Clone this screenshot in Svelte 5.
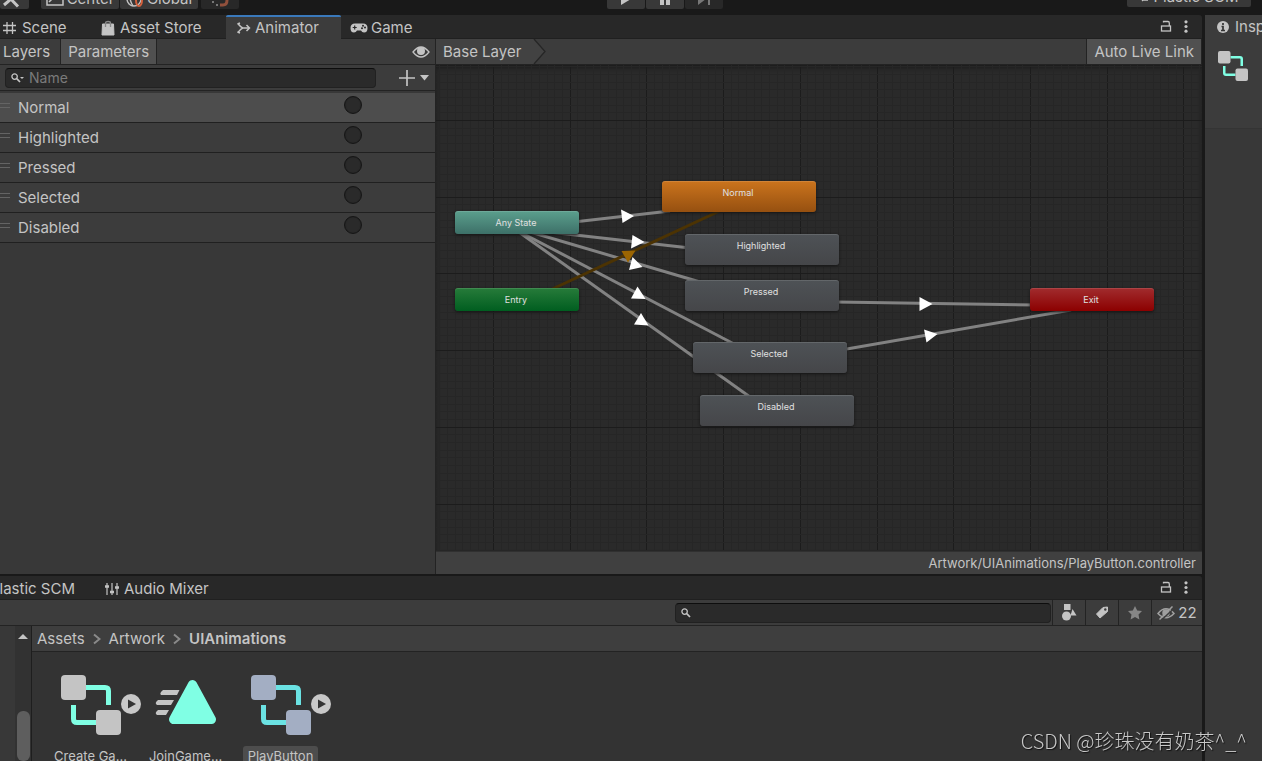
<script>
    const tabs = [
        { id: 'scene', label: 'Scene' },
        { id: 'store', label: 'Asset Store' },
        { id: 'animator', label: 'Animator' },
        { id: 'game', label: 'Game' }
    ]

    const parameters = ['Normal', 'Highlighted', 'Pressed', 'Selected', 'Disabled']

    // Graph coordinates are relative to the top left corner of the canvas
    const nodes = [
        { label: 'Any State', kind: 'any', x: 19, y: 146 },
        { label: 'Entry', kind: 'entry', x: 19, y: 223 },
        { label: 'Exit', kind: 'exit', x: 594, y: 223 },
        { label: 'Normal', kind: 'default', x: 226, y: 116 },
        { label: 'Highlighted', kind: 'state', x: 249, y: 169 },
        { label: 'Pressed', kind: 'state', x: 249, y: 215 },
        { label: 'Selected', kind: 'state', x: 257, y: 277 },
        { label: 'Disabled', kind: 'state', x: 264, y: 330 }
    ]

    const transitions = [
        { line: [94, 162, 234, 146], arrow: '185,144.5 198,151 186.5,158' },
        { line: [104, 166, 254, 183], arrow: '196.5,170 208.5,177 195,183.5' },
        { line: [84, 164, 264, 217], arrow: '196.5,192 206.5,202 193,205' },
        { line: [84, 167, 300, 280], arrow: '201.5,221.5 209.5,234 195,233.5' },
        { line: [80, 165, 314, 332], arrow: '205,248 212.5,260.5 198,259.5' },
        { line: [400, 237, 600, 240], arrow: '483.5,232 496.5,239 483.5,246' },
        { line: [405, 285, 635, 245], arrow: '488,264.5 501.5,269 490.5,277.5' },
        { line: [110, 227, 290, 143], arrow: '185.5,186 199.5,185.5 192,197.5', entry: true }
    ]

    const GRID = 76.7
    const gridLines = (start, length) => {
        const lines = []
        for (let i = -9; start + (i * GRID) / 10 < length; i++) {
            lines.push({ at: Math.round(start + (i * GRID) / 10), major: i % 10 === 0 })
        }
        return lines
    }
    const columns = gridLines(57, 2600)
    const rows = gridLines(55, 1600)

    const assets = [
        { name: 'Create Ga...', type: 'controller' },
        { name: 'JoinGame...', type: 'clip' },
        { name: 'PlayButton', type: 'controller' }
    ]

    let activeTab = $state('animator')
    let selectedParameter = $state('Normal')
    let selectedAsset = $state('PlayButton')
    let filter = $state('')
    let search = $state('')
</script>

{#snippet controllerIcon(size)}
    <svg class="controller-icon" width={size} height={size} viewBox="0 0 60 60" aria-hidden="true">
        <path class="wire" d="M25 12.500H44q3.500 0 3.500 3.500V30M12.500 30V44q0 3.500 3.500 3.500H35" />
        <rect width="25" height="25" rx="4" />
        <rect x="35" y="35" width="25" height="25" rx="4" />
    </svg>
{/snippet}

{#snippet searchIcon()}
    <svg width="10" height="10" viewBox="0 0 10 10" fill="none" stroke="#c4c4c4" stroke-width="1.300" aria-hidden="true">
        <circle cx="3.600" cy="3.600" r="2.700" />
        <path d="M5.700 5.700L9 9" stroke-width="1.700" />
    </svg>
{/snippet}

{#snippet windowButtons()}
    <div class="window-buttons">
        <button aria-label="Lock">
            <svg width="12" height="14" viewBox="0 0 12 14" fill="none" stroke="#c4c4c4" stroke-width="1.300">
                <rect x="1.500" y="6" width="9" height="5" />
                <path d="M3.500 2.500V1.500H8Q9.300 1.500 9.300 3V6" />
            </svg>
        </button>
        <button aria-label="Menu">
            <svg width="4" height="14" viewBox="0 0 4 14" fill="#c4c4c4">
                <circle cx="2" cy="1.800" r="1.600" />
                <circle cx="2" cy="6.500" r="1.600" />
                <circle cx="2" cy="11.200" r="1.600" />
            </svg>
        </button>
    </div>
{/snippet}

<div class="editor">
    <header class="toolbar">
        <button class="tool first" aria-label="Custom tools">
            <svg width="18" height="18" viewBox="0 0 18 18" stroke="#c4c4c4" stroke-width="3" fill="none">
                <path d="M3 3L16 16.500M15 4L2 15" />
            </svg>
        </button>
        <button class="tool pivot">
            <svg width="18" height="14" viewBox="0 0 18 14" fill="none" stroke="#c4c4c4" stroke-width="1.500">
                <rect x="1" y="1" width="16" height="12" />
                <path d="M3 10L6 7" />
            </svg>
            Center
        </button>
        <button class="tool space">
            <svg width="18" height="16" viewBox="0 0 18 16" fill="none" stroke="#c4c4c4" stroke-width="1.400">
                <circle cx="8" cy="8" r="7" />
                <path d="M4 1.500Q3 9 7 15" />
                <ellipse cx="13" cy="9" rx="3" ry="6" stroke="#d5603c" stroke-width="2" />
            </svg>
            Global
        </button>
        <button class="tool snap" aria-label="Grid snapping" disabled>
            <svg width="18" height="16" viewBox="0 0 18 16" fill="none" stroke-width="3">
                <path d="M9 14H12Q16 14 16 9V4" stroke="#91503c" />
                <path d="M1 11H3M5 14H7M5 8H7" stroke="#777" stroke-width="2" />
            </svg>
        </button>
        <span class="spacer-left"></span>
        <button class="tool play" aria-label="Play">
            <svg width="14" height="12" viewBox="0 0 14 12" fill="#c4c4c4"><path d="M2 0L12 6L2 12Z" /></svg>
        </button>
        <button class="tool play" aria-label="Pause">
            <svg width="14" height="12" viewBox="0 0 14 12" fill="#c4c4c4"><path d="M2 0H6V12H2ZM8 0H12V12H8Z" /></svg>
        </button>
        <button class="tool play" aria-label="Step" disabled>
            <svg width="14" height="12" viewBox="0 0 14 12" fill="#777"><path d="M1 0L9 6L1 12ZM11 0H13V12H11Z" /></svg>
        </button>
        <span class="spacer-right"></span>
        <button class="tool plastic">
            <svg width="10" height="10" viewBox="0 0 10 10" fill="none" stroke="#c4c4c4" stroke-width="1.500">
                <path d="M1 4L4 9M5 4V8H9" />
            </svg>
            Plastic SCM
        </button>
    </header>

    <div class="workspace">
        <main>
            <section class="dock upper">
                <div class="tab-bar">
                    {#each tabs as tab}
                        <button class="tab {tab.id}" class:active={activeTab === tab.id} onclick={() => (activeTab = tab.id)}>
                            {#if tab.id === 'scene'}
                                <svg width="14" height="14" viewBox="0 0 14 14" fill="none" stroke="#c4c4c4" stroke-width="1.300">
                                    <path d="M4 1V13M9.500 1V13M0 4.500H13M0 9.500H13" />
                                </svg>
                            {:else if tab.id === 'store'}
                                <svg width="14" height="16" viewBox="0 0 14 16">
                                    <path d="M1.500 4H12.500L13 15H1Z" fill="#c4c4c4" stroke="#c4c4c4" stroke-linejoin="round" />
                                    <path d="M4.500 7V3Q4.500 1.500 7 1.500Q9.500 1.500 9.500 3V7" fill="none" stroke="#888" stroke-width="1.300" />
                                </svg>
                            {:else if tab.id === 'animator'}
                                <svg width="14" height="14" viewBox="0 0 14 14" fill="none" stroke="#c4c4c4" stroke-width="1.500">
                                    <path d="M1 2.500Q4 6.500 6 7H12.500M1 11.500Q4 7.500 6 7M9.500 4L12.500 7L9.500 10" />
                                    <path d="M.500 3L3 2M.500 11L3 12" />
                                </svg>
                            {:else}
                                <svg width="18" height="12" viewBox="0 0 18 12">
                                    <path d="M5 1.500H13Q17.500 1.500 17.500 6T14 10.500Q12 10.500 11 8.500H7Q6 10.500 4 10.500Q.500 10.500 .500 6T5 1.500Z" fill="#c4c4c4" />
                                    <path d="M2.700 5.500H6.700M4.700 3.500V7.500" stroke="#282828" stroke-width="1.200" />
                                    <circle cx="13" cy="3.700" r="1" fill="#282828" />
                                    <circle cx="15" cy="5.500" r="1" fill="#282828" />
                                    <circle cx="12" cy="6.300" r="1" fill="#282828" />
                                </svg>
                            {/if}
                            {tab.label}
                        </button>
                    {/each}
                    {@render windowButtons()}
                </div>

                <div class="animator-window">
                    <aside class="side-panel">
                        <div class="bar">
                            <button class="bar-button layers">Layers</button>
                            <button class="bar-button on">Parameters</button>
                            <button class="eye" aria-label="Toggle panel">
                                <svg width="18" height="12" viewBox="0 0 18 12">
                                    <path d="M1 6Q9 -4 17 6Q9 16 1 6Z" fill="none" stroke="#c4c4c4" stroke-width="1.300" />
                                    <circle cx="9" cy="5" r="4" fill="#c4c4c4" />
                                </svg>
                            </button>
                        </div>
                        <div class="filter-row">
                            <div class="field">
                                {@render searchIcon()}
                                <span class="mini-caret"></span>
                                <input class="name-filter" type="text" placeholder="Name" aria-label="Filter parameters" bind:value={filter} />
                            </div>
                            <button class="add" aria-label="Add parameter">
                                <svg width="32" height="16" viewBox="0 0 32 16">
                                    <path d="M8 0V16M0 8H16" stroke="#c4c4c4" stroke-width="1.700" />
                                    <path d="M21 5H30L25.500 10.500Z" fill="#c4c4c4" />
                                </svg>
                            </button>
                        </div>
                        <ul class="parameters">
                            {#each parameters as name}
                                <li class:selected={selectedParameter === name}>
                                    <span class="grip"></span>
                                    <label for="param-{name}">{name}</label>
                                    <input id="param-{name}" type="radio" name="trigger" onclick={() => (selectedParameter = name)} />
                                </li>
                            {/each}
                        </ul>
                    </aside>

                    <div class="graph">
                        <div class="bar">
                            <button class="crumb">Base Layer</button>
                            <svg width="14" height="25" viewBox="0 0 14 25">
                                <path d="M0 0H1L12 12.500L1 25H0Z" fill="#424242" />
                                <path d="M1 0L12 12.500L1 25" fill="none" stroke="#262626" stroke-width="1.300" />
                            </svg>
                            <button class="bar-button on live">Auto Live Link</button>
                        </div>
                        <div class="canvas">
                            <svg class="lines" width="100%" height="100%">
                                <g shape-rendering="crispEdges">
                                    {#each columns as column}
                                        <line class="grid-line" class:major={column.major} x1={column.at} x2={column.at} y1="0" y2="100%" />
                                    {/each}
                                    {#each rows as row}
                                        <line class="grid-line" class:major={row.major} x1="0" x2="100%" y1={row.at} y2={row.at} />
                                    {/each}
                                </g>
                                {#each transitions as { line, arrow, entry }}
                                    <g class="transition" class:entry>
                                        <line x1={line[0]} y1={line[1]} x2={line[2]} y2={line[3]} />
                                        <polygon points={arrow} />
                                    </g>
                                {/each}
                            </svg>
                            {#each nodes as node}
                                <button class="node {node.kind}" style="left: {node.x}px; top: {node.y}px">{node.label}</button>
                            {/each}
                        </div>
                        <div class="path">Artwork/UIAnimations/PlayButton.controller</div>
                    </div>
                </div>
            </section>

            <section class="dock lower">
                <div class="tab-bar">
                    <button class="tab scm"><span>Plastic SCM</span></button>
                    <button class="tab mixer">
                        <svg width="14" height="14" viewBox="0 0 14 14" stroke="#c4c4c4" fill="#c4c4c4">
                            <path d="M2 1V13M7 1V13M12 1V13" stroke-width="1.200" />
                            <path d="M0 4.500H4M5 10H9M10 5.500H14" stroke-width="2.500" />
                        </svg>
                        Audio Mixer
                    </button>
                    {@render windowButtons()}
                </div>
                <div class="bar project-bar">
                    <div class="field">
                        {@render searchIcon()}
                        <input type="text" aria-label="Search assets" bind:value={search} />
                    </div>
                    <button class="filter" aria-label="Search by type">
                        <svg width="16" height="18" viewBox="0 0 16 18" fill="#c4c4c4">
                            <path d="M3 0H9.500V6H3ZM11.500 5L15.500 11.500H9.500Z" />
                            <circle cx="5.500" cy="12" r="4.500" />
                        </svg>
                    </button>
                    <button class="filter" aria-label="Search by label">
                        <svg width="14" height="14" viewBox="0 0 14 14">
                            <path d="M8 1.500L12.500 1L12.500 5.500L5 12L1.500 8Z" fill="#c4c4c4" stroke="#c4c4c4" stroke-linejoin="round" />
                            <circle cx="10.300" cy="3.500" r="1.200" fill="#3c3c3c" />
                        </svg>
                    </button>
                    <button class="filter" aria-label="Favorites">
                        <svg width="16" height="16" viewBox="0 0 16 16" fill="#868686">
                            <path d="M8 1L10.200 5.500L15 6.100L11.500 9.500L12.400 14.500L8 12L3.600 14.500L4.500 9.500L1 6.100L5.800 5.500Z" />
                        </svg>
                    </button>
                    <button class="filter hidden-count">
                        <svg width="18" height="14" viewBox="0 0 18 14" fill="none" stroke="#a0a0a0" stroke-width="1.500">
                            <path d="M1 7.500Q9 -2 17 7.500Q9 16 1 7.500Z" />
                            <circle cx="9" cy="7" r="3" fill="#a0a0a0" />
                            <path d="M4.500 14L17.500 2" stroke="#3c3c3c" />
                            <path d="M2.500 13.500L15.500 .500" />
                        </svg>
                        22
                    </button>
                </div>
                <div class="project">
                    <div class="tree"></div>
                    <div class="scrollbar">
                        <span class="up"></span>
                        <span class="thumb"></span>
                    </div>
                    <div class="browser">
                        <nav>
                            <a href="#assets">Assets</a>
                            <svg width="8" height="12" viewBox="0 0 8 12"><path d="M1 1.500L6.500 6L1 10.500" /></svg>
                            <a href="#artwork">Artwork</a>
                            <svg width="8" height="12" viewBox="0 0 8 12"><path d="M1 1.500L6.500 6L1 10.500" /></svg>
                            <a class="current" href="#uianimations">UIAnimations</a>
                        </nav>
                        <div class="assets">
                            {#each assets as asset}
                                <button class="asset" class:selected={selectedAsset === asset.name} onclick={() => (selectedAsset = asset.name)}>
                                    {#if asset.type === 'controller'}
                                        {@render controllerIcon(60)}
                                        <svg class="expand" width="20" height="20" viewBox="0 0 20 20">
                                            <circle cx="10" cy="10" r="10" fill="#c8c8c8" />
                                            <path d="M7 5.500L15 10L7 14.500Z" fill="#333" />
                                        </svg>
                                    {:else}
                                        <svg width="62" height="60" viewBox="0 0 62 60">
                                            <path d="M37.500 9.500L18.500 44.500H56.500Z" fill="#80ffe4" stroke="#80ffe4" stroke-width="9" stroke-linejoin="round" />
                                            <path d="M8 15H24.500L22 20H6Q4 18 8 15ZM3 25H19L16 30H2Q-1 28 3 25ZM3 35H14L11 40H2Q-1 38 3 35Z" fill="#c4c4c4" />
                                        </svg>
                                    {/if}
                                    <span class="name">{asset.name}</span>
                                </button>
                            {/each}
                        </div>
                    </div>
                </div>
            </section>
        </main>

        <aside class="inspector">
            <div class="inspector-tab">
                <svg width="12" height="12" viewBox="0 0 12 12">
                    <circle cx="6" cy="6" r="6" fill="#c4c4c4" />
                    <path d="M6 2V4M4.500 5.500H6V9.500M4 9.500H8" fill="none" stroke="#333" stroke-width="1.700" />
                </svg>
                Inspector
            </div>
            <div class="inspector-head">{@render controllerIcon(30)}</div>
        </aside>
    </div>

    <div class="watermark">CSDN @珍珠没有奶茶^_^</div>
</div>

<style>
    :global(body) {
        margin: 0;
        background: #383838;
    }

    .editor {
        display: flex;
        flex-direction: column;
        height: 100vh;
        overflow: hidden;
        font-family: Inter, 'Noto Sans CJK SC', sans-serif;
        font-size: 15px;
        line-height: 20px;
        color: #c4c4c4;
        background: #191919;
    }

    button,
    input {
        margin: 0;
        padding: 0;
        border: 0;
        border-radius: 0;
        background: none;
        color: inherit;
        font: inherit;
    }

    svg {
        display: block;
        flex: none;
    }

    /* Main toolbar */
    .toolbar {
        display: flex;
        align-items: flex-end;
        flex: none;
        gap: 1px;
        height: 9px;
        padding: 0 11px 6px 0;
        overflow: hidden;
    }

    .tool {
        display: flex;
        align-items: center;
        justify-content: center;
        flex: none;
        gap: 3px;
        height: 20px;
        background: #383838;
        border-radius: 0 0 2px 2px;
        white-space: nowrap;
    }

    .tool:disabled {
        background: #282828;
    }

    .first {
        width: 29px;
        margin-right: 11px;
        padding-right: 8px;
        box-sizing: border-box;
    }

    .pivot,
    .space {
        width: 78px;
    }

    .snap {
        width: 38px;
        margin-left: 2px;
    }

    .play {
        width: 38px;
    }

    .plastic {
        gap: 4px;
        width: 124px;
        margin-bottom: 2px;
    }

    .spacer-left {
        flex: 10;
    }

    .spacer-right {
        flex: 11;
    }

    .workspace {
        display: flex;
        flex: 1;
        min-height: 0;
    }

    main {
        display: flex;
        flex-direction: column;
        flex: 1;
        min-width: 0;
        border-right: 3px solid #191919;
    }

    .dock {
        display: flex;
        flex-direction: column;
        min-height: 0;
    }

    .upper {
        flex: 1;
    }

    .lower {
        flex: none;
        height: 185px;
        border-top: 2px solid #191919;
    }

    .tab-bar {
        display: flex;
        flex: none;
        height: 23px;
        background: #282828;
        border-bottom: 1px solid #202020;
        border-radius: 0 3px 0 0;
    }

    .tab {
        display: flex;
        align-items: center;
        gap: 5px;
        border-top: 2px solid transparent;
        white-space: nowrap;
        box-sizing: border-box;
    }

    .scene {
        width: 92px;
        padding-left: 3px;
    }

    .store {
        width: 134px;
        padding-left: 9px;
    }

    .animator {
        width: 115px;
        padding-left: 11px;
        gap: 4px;
    }

    .game {
        padding-left: 9px;
        gap: 3px;
    }

    .tab.active {
        height: 24px;
        border-top-color: #3a79bb;
        border-radius: 2px 2px 0 0;
        background: #3c3c3c;
    }

    .scm {
        justify-content: flex-end;
        width: 75px;
        overflow: hidden;
    }

    .mixer {
        margin-left: 30px;
    }

    .window-buttons {
        display: flex;
        align-items: center;
        gap: 12px;
        margin-left: auto;
        padding-right: 14px;
    }

    .bar {
        display: flex;
        align-items: stretch;
        flex: none;
        height: 25px;
        background: #3c3c3c;
        border-bottom: 1px solid #232323;
    }

    .bar-button {
        padding: 0 6px;
        border-right: 1px solid #232323;
        white-space: nowrap;
    }

    .layers {
        padding: 0 10px 0 3px;
    }

    .on {
        padding: 0 7px;
        background: #505050;
    }

    .animator-window {
        display: flex;
        flex: 1;
        min-height: 0;
    }

    .side-panel {
        flex: none;
        width: 435px;
        border-right: 1px solid #232323;
        background: #383838;
    }

    .eye {
        margin-left: auto;
        padding: 0 5px;
    }

    .filter-row {
        display: flex;
        align-items: center;
        justify-content: space-between;
        height: 25px;
        padding: 0 4px 0 5px;
        border-bottom: 1px solid #232323;
        background: #3c3c3c;
    }

    .field {
        display: flex;
        align-items: center;
        width: 371px;
        height: 20px;
        padding-left: 5px;
        border: 1px solid #212121;
        border-top-color: #0d0d0d;
        border-radius: 4px;
        background: #2a2a2a;
        box-sizing: border-box;
    }

    .field input {
        flex: 1;
        min-width: 0;
        margin-left: 5px;
        outline: none;
    }

    .field .name-filter {
        font-size: 14px;
    }

    .field input::placeholder {
        color: #7a7a7a;
        opacity: 1;
    }

    .mini-caret {
        border: 2px solid transparent;
        border-top-color: #c4c4c4;
        border-bottom: 0;
        margin-left: -1px;
    }

    .parameters {
        margin: 0;
        padding: 2px 0 0;
        list-style: none;
    }

    .parameters li {
        display: flex;
        align-items: center;
        height: 29px;
        padding-right: 73px;
        border-bottom: 1px solid #202020;
        background: #3c3c3c;
    }

    .parameters .selected {
        background: #4d4d4d;
    }

    .grip {
        width: 10px;
        height: 3px;
        margin: 0 8px 5px 0;
        border: solid #646464;
        border-width: 1px 0;
    }

    .parameters label {
        flex: 1;
    }

    .parameters input {
        appearance: none;
        width: 18px;
        height: 18px;
        margin-bottom: 6px;
        border: 1px solid #161616;
        border-radius: 50%;
        background: #2a2a2a;
        box-shadow: inset 0 0 1px #161616;
    }

    .graph {
        display: flex;
        flex-direction: column;
        flex: 1;
        min-width: 0;
    }

    .crumb {
        padding: 0 12px 0 7px;
        background: #424242;
    }

    .live {
        margin-left: auto;
        border-left: 1px solid #232323;
    }

    .canvas {
        position: relative;
        flex: 1;
        min-height: 0;
        overflow: hidden;
        background: #2a2a2a;
        box-shadow: inset 0 3px 4px #1c1c1c;
    }

    .lines {
        position: absolute;
        inset: 0;
    }

    .grid-line {
        stroke: #262626;
    }

    .grid-line.major {
        stroke: #1c1c1c;
    }

    .transition line {
        stroke: #828282;
        stroke-width: 3;
    }

    .transition polygon {
        fill: #fff;
    }

    .transition.entry line {
        stroke: #4c3303;
    }

    .transition.entry polygon {
        fill: #9b6502;
    }

    .node {
        position: absolute;
        width: 154px;
        height: 31px;
        padding: 0 2px 8px 0;
        border-radius: 3px;
        background: linear-gradient(#4e5256, #454649);
        box-shadow: inset 0 1px rgba(255, 255, 255, 0.12), 0 1px 3px #151515;
        color: #e0e0e0;
        font-size: 9px;
        line-height: 12px;
    }

    .any,
    .entry.node,
    .exit {
        width: 124px;
        height: 23px;
        padding-bottom: 0;
    }

    .any {
        background: linear-gradient(#5b9f8d, #3d7068);
    }

    .entry.node {
        background: linear-gradient(#277b3a, #005e20);
    }

    .exit {
        background: linear-gradient(#a12c2e, #8c0000);
    }

    .default {
        background: linear-gradient(#cb741d, #965010);
    }

    .path {
        flex: none;
        height: 22px;
        padding-right: 6px;
        border-top: 1px solid #303030;
        background: #404040;
        font-size: 13px;
        line-height: 22px;
        text-align: right;
    }

    /* Project window */
    .project-bar {
        align-items: center;
        justify-content: flex-end;
    }

    .project-bar .field {
        width: 376px;
        margin-right: 1px;
    }

    .filter {
        display: flex;
        align-items: center;
        justify-content: center;
        width: 33px;
        height: 25px;
        border-left: 1px solid #232323;
        box-sizing: border-box;
    }

    .hidden-count {
        gap: 3px;
        width: 51px;
    }

    .project {
        display: flex;
        flex: 1;
        min-height: 0;
        overflow: hidden;
        background: #333;
    }

    .tree {
        width: 15px;
        background: #383838;
    }

    .scrollbar {
        display: flex;
        flex-direction: column;
        align-items: center;
        justify-content: space-between;
        width: 17px;
        padding-top: 8px;
        border-right: 1px solid #1e1e1e;
        background: #323232;
        box-sizing: border-box;
    }

    .up {
        border: 5px solid transparent;
        border-top: 0;
        border-bottom-color: #c4c4c4;
    }

    .thumb {
        width: 13px;
        height: 50px;
        border-radius: 6px;
        background: #5e5e5e;
    }

    .browser {
        flex: 1;
        min-width: 0;
    }

    nav {
        display: flex;
        align-items: center;
        gap: 8px;
        height: 25px;
        padding-left: 5px;
        border-bottom: 1px solid #232323;
        background: #3e3e3e;
    }

    nav a {
        color: inherit;
        text-decoration: none;
    }

    nav svg {
        fill: none;
        stroke: #8a8a8a;
        stroke-width: 2;
    }

    .current {
        font-weight: 600;
    }

    .assets {
        display: flex;
        padding: 23px 0 0 11px;
    }

    .asset {
        position: relative;
        display: flex;
        flex-direction: column;
        align-items: center;
        gap: 11px;
        width: 95px;
    }

    .expand {
        position: absolute;
        top: 19px;
        left: 78px;
    }

    .controller-icon {
        fill: #c4c4c4;
    }

    .wire {
        fill: none;
        stroke: #80ffe4;
        stroke-width: 5;
    }

    .asset.selected .controller-icon {
        fill: #a3aec3;
    }

    .asset.selected .wire {
        stroke: #6be2e3;
    }

    .name {
        padding: 0 5px;
        border-radius: 3px;
        font-size: 13px;
        white-space: nowrap;
    }

    .asset.selected .name {
        background: #4d4d4d;
    }

    /* Inspector */
    .inspector {
        flex: none;
        width: 57px;
        overflow: hidden;
        background: #383838;
    }

    .inspector-tab {
        display: flex;
        align-items: center;
        gap: 6px;
        height: 24px;
        padding-left: 12px;
        background: #3c3c3c;
    }

    .inspector-head {
        height: 77px;
        padding: 12px 0 0 13px;
        border-bottom: 1px solid #343434;
        background: #3c3c3c;
    }

    .watermark {
        position: fixed;
        right: 15px;
        bottom: 6px;
        color: #c8c8c8;
        font-family: 'Noto Sans CJK SC', sans-serif;
        font-weight: 300;
        font-size: 20px;
        line-height: 28px;
        text-shadow: 1px 1px 1px #111;
    }
</style>
